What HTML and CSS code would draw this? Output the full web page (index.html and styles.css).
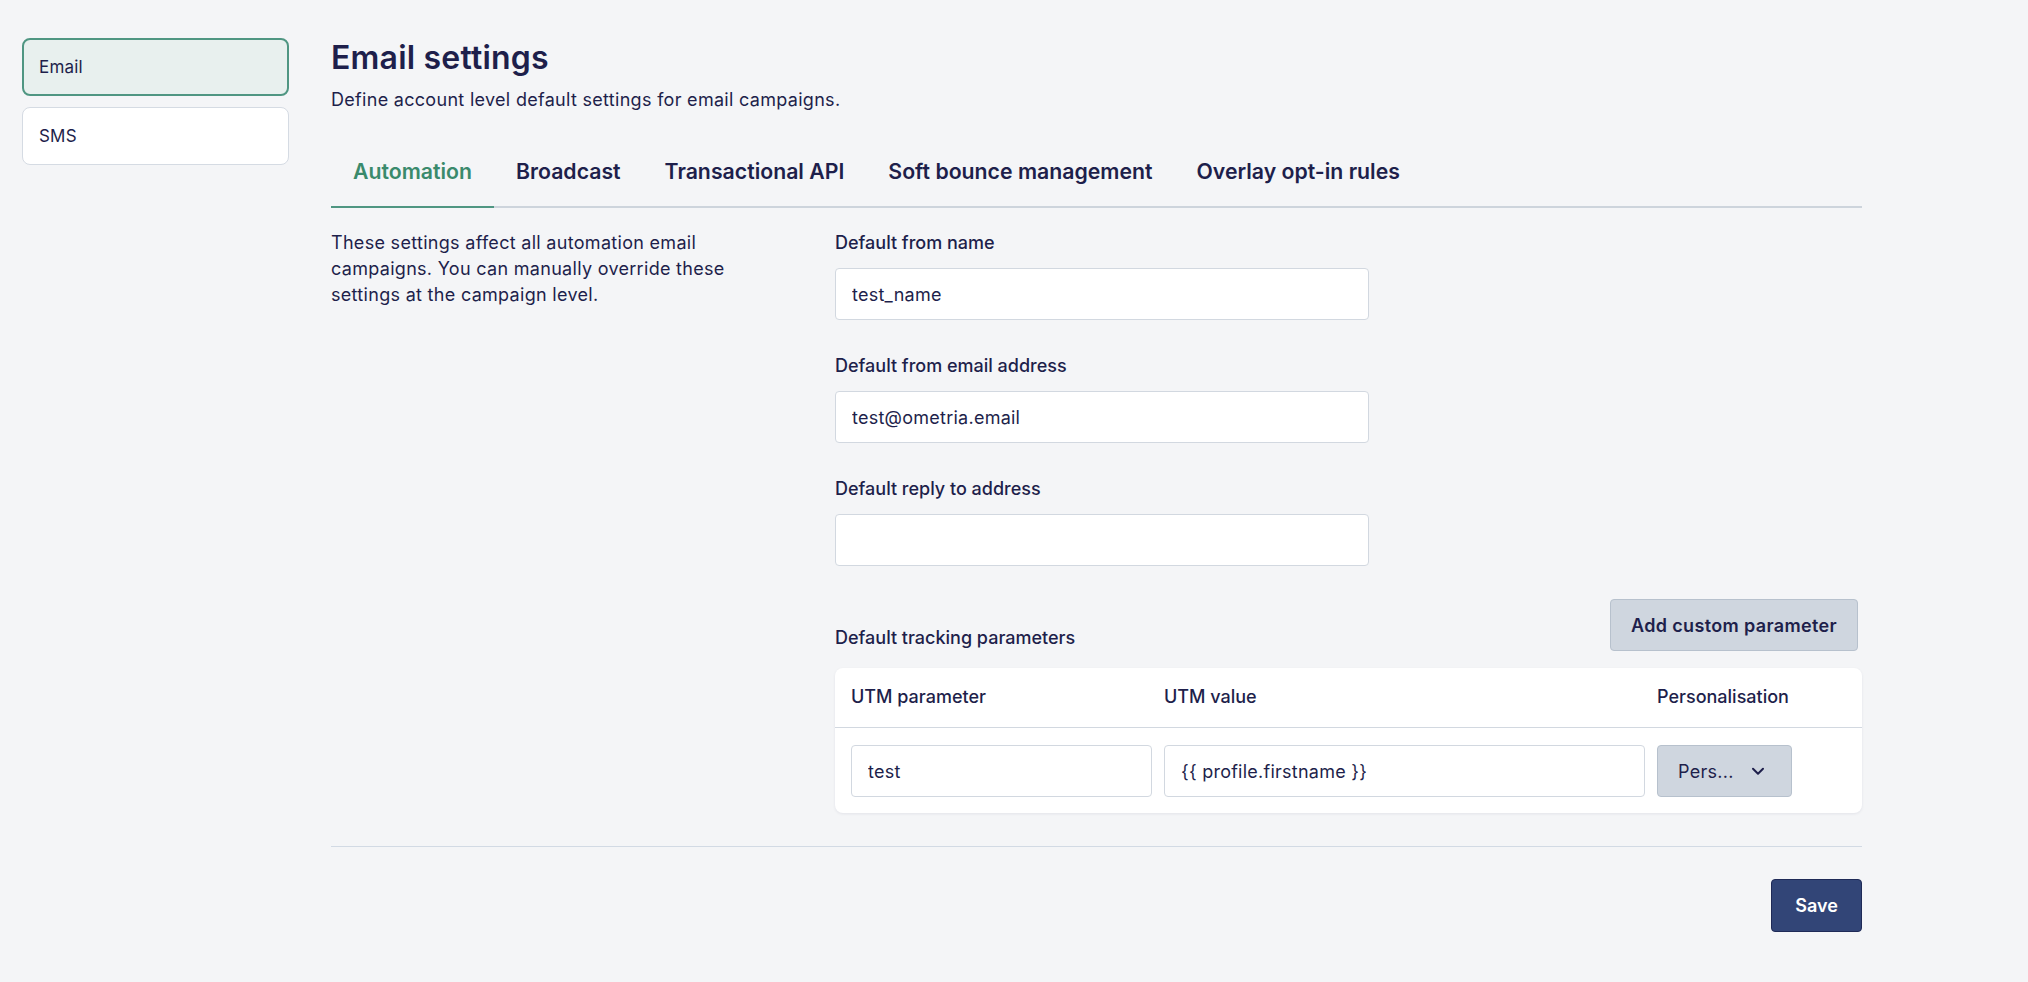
FILE: index.html
```html
<!DOCTYPE html>
<html lang="en">
<head>
    <meta charset="UTF-8">
    <meta name="viewport" content="width=device-width, initial-scale=1.0">
    <title>Email settings</title>
    <link rel="stylesheet" href="styles.css">
</head>
<body>
    <div class="page">
        <!-- Channel list -->
        <aside class="side-nav">
            <a href="#" class="side-item active">Email</a>
            <a href="#" class="side-item">SMS</a>
        </aside>

        <!-- Main Section -->
        <main class="content">
            <h1>Email settings</h1>
            <p class="subtitle">Define account level default settings for email campaigns.</p>

            <nav class="tabs">
                <a href="#" class="tab active">Automation</a>
                <a href="#" class="tab">Broadcast</a>
                <a href="#" class="tab">Transactional API</a>
                <a href="#" class="tab">Soft bounce management</a>
                <a href="#" class="tab">Overlay opt-in rules</a>
            </nav>

            <section class="settings">
                <p class="settings-desc">These settings affect all automation email campaigns. You can manually override these settings at the campaign level.</p>

                <form class="settings-form">
                    <div class="field">
                        <label for="fromName">Default from name</label>
                        <input type="text" id="fromName" value="test_name">
                    </div>
                    <div class="field">
                        <label for="fromEmail">Default from email address</label>
                        <input type="text" id="fromEmail" value="test@ometria.email">
                    </div>
                    <div class="field">
                        <label for="replyTo">Default reply to address</label>
                        <input type="text" id="replyTo" value="">
                    </div>

                    <!-- Tracking parameters -->
                    <div class="tracking-head">
                        <span class="field-label">Default tracking parameters</span>
                        <button type="button" class="btn-secondary add-btn">Add custom parameter</button>
                    </div>

                    <div class="utm-card">
                        <div class="utm-row utm-header">
                            <span>UTM parameter</span>
                            <span>UTM value</span>
                            <span>Personalisation</span>
                        </div>
                        <div class="utm-row utm-body">
                            <input type="text" value="test">
                            <input type="text" value="{{ profile.firstname }}">
                            <button type="button" class="btn-secondary pers-btn">
                                <span>Pers...</span>
                                <svg width="14" height="14" viewBox="0 0 14 14" fill="none"><path d="M2 4.8l5 4.9 5-4.9" stroke="#1e1f4b" stroke-width="2" stroke-linecap="round" stroke-linejoin="round"/></svg>
                            </button>
                        </div>
                    </div>
                </form>
            </section>

            <div class="footer-actions">
                <button type="button" class="btn-primary">Save</button>
            </div>
        </main>
    </div>
</body>
</html>
```

FILE: styles.css
```css
/* General Reset */
* {
    margin: 0;
    padding: 0;
    box-sizing: border-box;
}

body {
    font-family: Inter, "Noto Sans", sans-serif;
    background-color: #f4f5f7;
    color: #1e1f4b;
    font-size: 18px;
    line-height: 26px;
    letter-spacing: 0.3px;
}

.page {
    display: flex;
    gap: 42px;
    padding: 38px 22px;
}

/* Side navigation */
.side-nav {
    width: 267px;
    flex: none;
    display: flex;
    flex-direction: column;
    gap: 11px;
}

.side-item {
    display: flex;
    align-items: center;
    height: 58px;
    padding-left: 16px;
    background: white;
    border: 1px solid #d5dbe3;
    border-radius: 8px;
    color: #1e1f4b;
    text-decoration: none;
    font-size: 17px;
    letter-spacing: 0.2px;
}

.side-item.active {
    background: #e8f0ee;
    border: 2px solid #4f9682;
    padding-left: 15px;
}

/* Main Section */
.content {
    width: 1531px;
    flex: none;
}

h1 {
    margin-top: 1px;
    font-size: 32px;
    line-height: 38px;
    font-weight: 600;
    letter-spacing: 0.2px;
}

.subtitle {
    margin-top: 10px;
}

/* Tabs */
.tabs {
    display: flex;
    margin-top: 25px;
    border-bottom: 2px solid #cdd4dc;
}

.tab {
    padding: 18px 22px 20px;
    margin-bottom: -2px;
    border-bottom: 2px solid transparent;
    font-size: 21.25px;
    line-height: 30px;
    font-weight: 600;
    letter-spacing: 0;
    color: #1e1f4b;
    text-decoration: none;
}

.tab.active {
    color: #3a8a6c;
    border-bottom-color: #4f9682;
}

/* Settings */
.settings {
    display: grid;
    grid-template-columns: 472px 1fr;
    gap: 32px;
    padding-top: 22px;
}

.settings-desc {
    max-width: 430px;
}

.field {
    margin-bottom: 33px;
}

.field label,
.field-label {
    display: block;
    font-weight: 500;
    letter-spacing: 0;
}

.field label {
    margin-bottom: 12px;
}

input {
    font-family: inherit;
    font-size: 18px;
    letter-spacing: 0.25px;
    color: #1e1f4b;
    height: 52px;
    padding: 0 16px;
    background: white;
    border: 1px solid #d2d8e0;
    border-radius: 4px;
    outline: none;
}

.field input {
    width: 534px;
}

.tracking-head {
    display: flex;
    justify-content: space-between;
    align-items: flex-end;
    margin-top: 1px;
}

button {
    font-family: inherit;
    font-size: 18px;
    cursor: pointer;
}

.btn-secondary {
    height: 52px;
    padding: 0 20px;
    background: #cfd6df;
    border: 1px solid #b7c1cd;
    border-radius: 4px;
    color: #1e1f4b;
    letter-spacing: 0.3px;
}

.add-btn {
    font-weight: 600;
    letter-spacing: 0.35px;
    margin-right: 4px;
}

/* UTM table */
.utm-card {
    margin-top: 17px;
    background: white;
    border-radius: 8px;
    box-shadow: 0 1px 3px rgba(30, 31, 75, 0.08);
}

.utm-row {
    display: grid;
    grid-template-columns: 301px 1fr 189px;
    gap: 12px;
    padding: 16px;
}

.utm-header {
    padding-bottom: 17px;
    border-bottom: 1px solid #d2d8e0;
    font-weight: 500;
    letter-spacing: 0;
}

.utm-body {
    padding-top: 17px;
}

.utm-body input {
    width: 100%;
}

.pers-btn {
    width: 135px;
    display: flex;
    align-items: center;
    gap: 17px;
}

/* Footer */
.footer-actions {
    display: flex;
    justify-content: flex-end;
    margin-top: 33px;
    padding-top: 32px;
    border-top: 1px solid #d2dae4;
}

.btn-primary {
    height: 53px;
    width: 91px;
    background: #324577;
    border: 1px solid #1f2a57;
    border-radius: 4px;
    color: white;
    font-weight: 600;
}
```
